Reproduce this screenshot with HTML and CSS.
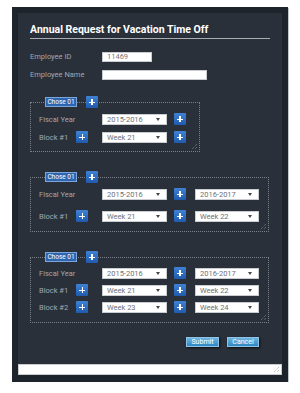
FILE: index.html
```html
<!DOCTYPE html>
<html>
<head>
<meta charset="utf-8">
<link rel="stylesheet" href="styles.css">
</head>
<body>
<div class="frame">
  <div class="panel">
    <div class="content">
      <h1 class="title">Annual Request for Vacation Time Off</h1>
      <div class="field first"><span class="flabel">Employee ID</span><div class="input id">11469</div></div>
      <div class="field"><span class="flabel">Employee Name</span><div class="input name"></div></div>

      <div class="section s1">
        <div class="shead"><span class="chose">Chose 01</span><span class="plus"></span></div>
        <div class="box narrow">
          <div class="row"><span class="rlabel">Fiscal Year</span><div class="select">2015-2016<i></i></div><span class="plus"></span></div>
          <div class="row"><span class="rlabel">Block #1<span class="plus"></span></span><div class="select">Week 21<i></i></div><span class="plus"></span></div>
          <svg class="grip" width="7" height="7" viewBox="0 0 7 7"><path d="M6 1L1 6M6 4L4 6" stroke="#8a9099" stroke-width="0.8" stroke-dasharray="1 1"/></svg>
        </div>
      </div>

      <div class="section s2">
        <div class="shead"><span class="chose">Chose 01</span><span class="plus"></span></div>
        <div class="box wide">
          <div class="row"><span class="rlabel">Fiscal Year</span><div class="select">2015-2016<i></i></div><span class="plus"></span><div class="select">2016-2017<i></i></div></div>
          <div class="row"><span class="rlabel">Block #1<span class="plus"></span></span><div class="select">Week 21<i></i></div><span class="plus"></span><div class="select">Week 22<i></i></div></div>
          <svg class="grip" width="7" height="7" viewBox="0 0 7 7"><path d="M6 1L1 6M6 4L4 6" stroke="#8a9099" stroke-width="0.8" stroke-dasharray="1 1"/></svg>
        </div>
      </div>

      <div class="section s3">
        <div class="shead"><span class="chose">Chose 01</span><span class="plus"></span></div>
        <div class="box wide">
          <div class="row"><span class="rlabel">Fiscal Year</span><div class="select">2015-2016<i></i></div><span class="plus"></span><div class="select">2016-2017<i></i></div></div>
          <div class="row"><span class="rlabel">Block #1<span class="plus"></span></span><div class="select">Week 21<i></i></div><span class="plus"></span><div class="select">Week 22<i></i></div></div>
          <div class="row"><span class="rlabel">Block #2<span class="plus"></span></span><div class="select">Week 23<i></i></div><span class="plus"></span><div class="select">Week 24<i></i></div></div>
          <svg class="grip" width="7" height="7" viewBox="0 0 7 7"><path d="M6 1L1 6M6 4L4 6" stroke="#8a9099" stroke-width="0.8" stroke-dasharray="1 1"/></svg>
        </div>
      </div>

      <div class="actions"><span class="btn">Submit</span><span class="btn">Cancel</span></div>
    </div>
    <div class="notes">
      <svg class="grip2" width="7" height="7" viewBox="0 0 7 7"><path d="M6 1L1 6M6 4L4 6" stroke="#8a9099" stroke-width="0.8" stroke-dasharray="1 1"/></svg>
    </div>
  </div>
</div>
</body>
</html>
```

FILE: styles.css
```css
* { box-sizing: border-box; }
html, body { margin: 0; padding: 0; background: #ffffff; }
body { font-family: Roboto, "Liberation Sans", sans-serif; }

.frame {
  width: 276px;
  margin: 7px 0 0 12px;
  padding: 6px 6px 7px 6px;
  background: #1e242b;
  box-shadow: 1px 1px 0 #c2c5c9;
}
.panel { background: #29303a; }
.content { padding: 10px 12px 17px 12px; }

.title {
  margin: 0;
  font-size: 10.5px;
  line-height: 14px;
  font-weight: bold;
  color: #ffffff;
  padding-bottom: 1px;
  border-bottom: 1.5px solid #a9adb2;
}

.field { display: flex; align-items: center; height: 10px; margin-top: 8px; }
.field.first { margin-top: 13px; }
.flabel { width: 72px; font-size: 7.5px; color: #a3a8ae; line-height: 10px; }
.input {
  height: 10px;
  background: #ffffff;
  border: 1px solid #c9ccd0;
  font-size: 7.5px;
  line-height: 8px;
  color: #777;
  padding-left: 4px;
}
.input.id { width: 50px; }
.input.name { width: 105px; }

.section { margin-top: 20px; }
.section.s1 { margin-top: 17px; }
.shead { display: flex; align-items: center; gap: 9px; padding-left: 15px; height: 10px; position: relative; z-index: 1; }
.chose {
  width: 32px; height: 10px;
  background: #2d65b0;
  border: 1px solid #7aa6da;
  color: #ffffff;
  font-size: 6.5px;
  line-height: 8px;
  text-align: center;
}
.plus {
  position: relative;
  width: 12px; height: 12px;
  background: linear-gradient(#3f82d4, #1f5bae);
  border-radius: 1px;
  flex: none;
}
.plus::before, .plus::after {
  content: "";
  position: absolute;
  background: #ffffff;
}
.plus::before { left: 3px; top: 5.5px; width: 6px; height: 1.3px; }
.plus::after { left: 5.4px; top: 3px; width: 1.3px; height: 6px; }

.box {
  position: relative;
  margin-top: -5px;
  border: 1px dotted #7a818a;
  padding: 10px 0 8px 8px;
  display: flex;
  flex-direction: column;
}
.box.narrow { width: 170px; gap: 6px; }
.box.wide { width: 239px; }
.s2 .box { gap: 10px; padding-bottom: 9px; }
.s3 .box { gap: 5px; padding-top: 9px; padding-bottom: 9px; }

.row { display: flex; align-items: center; height: 12px; }
.rlabel { width: 63px; display: flex; align-items: center; gap: 8px; font-size: 7.5px; color: #a3a8ae; }
.select {
  position: relative;
  width: 65px; height: 11px;
  background: #ffffff;
  border: 1px solid #c9ccd0;
  font-size: 7.5px;
  line-height: 9px;
  color: #6e7278;
  padding-left: 4px;
}
.select i {
  position: absolute;
  right: 6px; top: 3.5px;
  width: 0; height: 0;
  border-left: 2.2px solid transparent;
  border-right: 2.2px solid transparent;
  border-top: 3px solid #444;
}
.row .plus { margin-left: 7px; }
.row .plus + .select { margin-left: 9px; width: 64px; }
.rlabel .plus { margin-left: 0; }

.grip { position: absolute; right: 1px; bottom: 1px; }

.actions { display: flex; justify-content: flex-end; gap: 8px; margin-top: 14px; padding-right: 11px; }
.btn {
  width: 33px; height: 10px;
  background: linear-gradient(#6cb6e2, #2f86c3);
  border: 1px solid #8fc3e4;
  box-shadow: 1px 1px 2px rgba(0,0,0,0.7);
  color: #ffffff;
  font-size: 7px;
  line-height: 8px;
  text-align: center;
}
.btn + .btn { width: 32px; }

.notes {
  position: relative;
  height: 11px;
  background: #ffffff;
  border: 1px solid #c9ccd0;
}
.grip2 { position: absolute; right: 1px; bottom: 1px; }
```
